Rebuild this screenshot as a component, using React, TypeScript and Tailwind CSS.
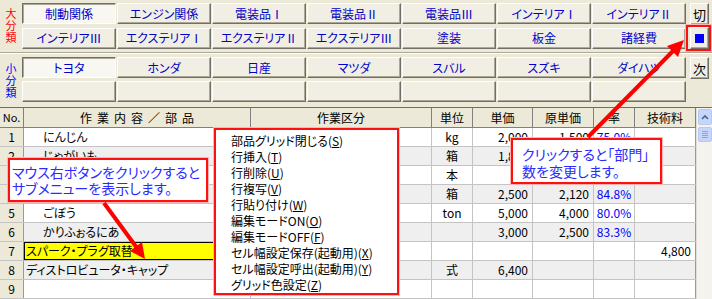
import React from 'react'

const bigCats = [
  ['制動関係', 'エンジン関係', '電装品Ⅰ', '電装品Ⅱ', '電装品Ⅲ', 'インテリアⅠ', 'インテリアⅡ'],
  ['インテリアⅢ', 'エクステリアⅠ', 'エクステリアⅡ', 'エクステリアⅢ', '塗装', '板金', '諸経費'],
]
const smallCats = [
  ['トヨタ', 'ホンダ', '日産', 'マツダ', 'スバル', 'スズキ', 'ダイハツ'],
  ['', '', '', '', '', '', ''],
]

const raised =
  'flex items-center justify-center h-[21px] bg-[#F1EFE4] border border-t-white border-l-white border-r-[#716F64] border-b-[#716F64] shadow-[inset_-1px_-1px_0_#ACA899] text-[12px] leading-none text-[#0000C8]'
const pressed =
  'flex items-center justify-center h-[21px] bg-[#F8F7F2] border border-t-[#716F64] border-l-[#716F64] border-r-white border-b-white shadow-[inset_1px_1px_0_#ACA899] text-[12px] leading-none text-[#0000C8]'

const Btn = ({ label, on }: { label: string; on?: boolean }) => (
  <div className={on ? pressed : raised}>{label}</div>
)

const W = ['w-[24px]', 'w-[227px]', 'w-[181px]', 'w-[41px]', 'w-[60px]', 'w-[61px]', 'w-[41px]', 'w-[61px]']
const heads = ['No.', '作業内容／部品', '作業区分', '単位', '単価', '原単価', '率', '技術料']

type Row = { name: string; unit?: string; price?: string; cost?: string; rate?: string; fee?: string; hl?: boolean; flush?: boolean }
// rows 2-4 are partly under the callouts
const rows: Row[] = [
  { name: 'にんじん', unit: 'kg', price: '2,000', cost: '1,500', rate: '75.0%' },
  { name: 'じゃがいも', unit: '箱', price: '1,800' },
  { name: '', unit: '本' },
  { name: '', unit: '箱', price: '2,500', cost: '2,120', rate: '84.8%' },
  { name: 'ごぼう', unit: 'ton', price: '5,000', cost: '4,000', rate: '80.0%' },
  { name: 'かりふぉるにあ', price: '3,000', cost: '2,500', rate: '83.3%' },
  { name: 'スパーク・プラグ取替', fee: '4,800', hl: true, flush: true },
  { name: 'ディストロビュータ・キャップ', unit: '式', price: '6,400', flush: true },
  { name: '' },
]

const menu: [string, string][] = [
  ['部品グリッド閉じる', 'S'],
  ['行挿入', 'T'],
  ['行削除', 'U'],
  ['行複写', 'V'],
  ['行貼り付け', 'W'],
  ['編集モードON', 'O'],
  ['編集モードOFF', 'F'],
  ['セル幅設定保存(起動用)', 'X'],
  ['セル幅設定呼出(起動用)', 'Y'],
  ['グリッド色設定', 'Z'],
]

export default function App() {
  return (
    <div className="relative w-[712px] h-[299px] overflow-hidden bg-[#ECE9D8] font-['Noto_Sans_CJK_JP',sans-serif] text-black [font-feature-settings:'palt']">
      {/* large categories */}
      <div className="flex pt-[3px]">
        <div className="w-[22px] flex flex-col items-center pt-[4px] text-[11px] leading-[12px] text-[#FF0000]">
          <span>大</span>
          <span>分</span>
          <span>類</span>
        </div>
        <div className="grid grid-cols-7 w-[664px] gap-x-px gap-y-[3px]">
          {bigCats.flat().map((c, i) => (
            <Btn key={i} label={c} on={i === 0} />
          ))}
        </div>
        <div className="ml-[4px] w-[19px] flex flex-col gap-[2px]">
          <div className={raised + ' !h-[22px] !text-black !text-[13px]'}>切</div>
          <div className="relative">
            <div className={raised + ' !h-[22px]'}>
              <div className="w-[9px] h-[9px] bg-[#0000FF]" />
            </div>
            <div className="absolute -left-[4px] -top-[2px] w-[25px] h-[26px] border-2 border-[#FF1010] shadow-[0_0_0_1px_#FFB4B4]" />
          </div>
        </div>
      </div>

      <div className="mt-[3px] h-[2px] border-t border-[#ACA899] border-b border-b-white" />

      {/* small categories */}
      <div className="flex pt-[3px]">
        <div className="w-[22px] flex flex-col items-center pt-[5px] text-[11px] leading-[12px] text-[#0000FF]">
          <span>小</span>
          <span>分</span>
          <span>類</span>
        </div>
        <div className="grid grid-cols-7 w-[664px] gap-x-px gap-y-[3px]">
          {smallCats.flat().map((c, i) => (
            <Btn key={i} label={c} on={i === 0} />
          ))}
        </div>
        <div className="ml-[4px] w-[19px]">
          <div className={raised + ' !h-[22px] !text-black !text-[13px]'}>次</div>
        </div>
      </div>

      {/* grid */}
      <div className="mt-[5px] flex border-t border-[#716F64] bg-white">
        <div className="w-[696px]">
          <div className="flex h-[20px] bg-[#ECE9D8] border-b border-[#808080] text-[12px] leading-[19px]">
            {heads.map((h, i) => (
              <div
                key={i}
                className={
                  W[i] +
                  ' shrink-0 border-r border-[#808080] text-center' +
                  (i === 0 ? ' text-[11px]' : '') +
                  (i === 1 ? ' tracking-[5px] pl-[5px]' : '')
                }
              >
                {h}
              </div>
            ))}
          </div>
          {rows.map((r, i) => (
            <div
              key={i}
              className={'flex h-[19px] border-b border-[#C4C4C4] text-[12px] leading-[18px] ' + (i % 2 === 1 ? 'bg-[#EFEFEF]' : 'bg-white')}
            >
              <div className={W[0] + ' shrink-0 bg-[#ECE9D8] border-r border-[#9A9A9A] text-center'}>{i + 1}</div>
              <div
                className={
                  W[1] +
                  ' shrink-0 border-r border-[#C4C4C4] whitespace-nowrap overflow-hidden ' +
                  (r.flush ? 'pl-[2px] ' : 'pl-[19px] ') +
                  (r.hl ? 'bg-[#FFFF00] shadow-[inset_0_0_0_1px_#000]' : '')
                }
              >
                {r.name}
              </div>
              <div className={W[2] + ' shrink-0 border-r border-[#C4C4C4]'} />
              <div className={W[3] + ' shrink-0 border-r border-[#C4C4C4] text-center'}>{r.unit}</div>
              <div className={W[4] + ' shrink-0 border-r border-[#C4C4C4] text-right pr-[4px]'}>{r.price}</div>
              <div className={W[5] + ' shrink-0 border-r border-[#C4C4C4] text-right pr-[4px]'}>{r.cost}</div>
              <div className={W[6] + ' shrink-0 border-r border-[#C4C4C4] text-center text-[#0000FF]'}>{r.rate}</div>
              <div className={W[7] + ' shrink-0 border-r border-[#9A9A9A] text-right pr-[4px]'}>{r.fee}</div>
            </div>
          ))}
        </div>
        {/* scrollbar */}
        <div className="w-[16px] bg-[#F4F3EE] flex flex-col items-center pt-[1px] border-l border-[#E2E0D6]">
          <div className="w-[14px] h-[16px] rounded-[2px] bg-[#C7D5FA] border border-[#B6C9F5] flex items-center justify-center">
            <svg width="8" height="6" viewBox="0 0 8 6">
              <path d="M1 5 L4 2 L7 5" fill="none" stroke="#4D6185" strokeWidth="1.6" />
            </svg>
          </div>
          <div className="mt-[2px] w-[14px] h-[15px] rounded-[2px] bg-[#C7D5FA] border border-[#B6C9F5] flex flex-col items-center justify-center gap-[1px]">
            <div className="w-[6px] h-px bg-[#8CA4DB]" />
            <div className="w-[6px] h-px bg-[#8CA4DB]" />
            <div className="w-[6px] h-px bg-[#8CA4DB]" />
            <div className="w-[6px] h-px bg-[#8CA4DB]" />
          </div>
        </div>
      </div>

      {/* context menu */}
      <div className="absolute left-[214px] top-[128px] w-[185px] h-[167px] bg-white border-2 border-[#FF1010] shadow-[0_0_0_1px_#FFB4B4] pt-[3px] pl-[15px] text-[12px] leading-[16px] whitespace-nowrap">
        {menu.map(([t, k]) => (
          <div key={k} className="h-[16px]">
            {t}(<span className="underline">{k}</span>)
          </div>
        ))}
      </div>

      {/* callouts */}
      <div className="absolute left-[8px] top-[158px] w-[200px] h-[44px] bg-white border-2 border-[#FF1010] shadow-[0_0_0_1px_#FFB4B4] pl-[2px] pt-[4px] text-[14px] leading-[16px] text-[#2B2BFF] whitespace-nowrap">
        <div>マウス右ボタンをクリックすると</div>
        <div>サブメニューを表示します。</div>
      </div>
      <div className="absolute left-[511px] top-[138px] w-[151px] h-[46px] bg-white border-2 border-[#FF1010] shadow-[0_0_0_1px_#FFB4B4] pl-[9px] pt-[6px] text-[14px] leading-[17px] text-[#2B2BFF] whitespace-nowrap">
        <div>クリックすると「部門」</div>
        <div>数を変更します。</div>
      </div>

      {/* arrows */}
      <svg className="absolute inset-0 pointer-events-none" width="712" height="299" viewBox="0 0 712 299">
        <line x1="104" y1="203" x2="137" y2="248" stroke="#FF0000" strokeWidth="4" />
        <polygon points="145,259 130,251 142,242" fill="#FF0000" />
        <line x1="588" y1="137" x2="673" y2="51" stroke="#FF0000" strokeWidth="4" />
        <polygon points="684,40 678,57 667,46" fill="#FF0000" />
      </svg>
    </div>
  )
}
